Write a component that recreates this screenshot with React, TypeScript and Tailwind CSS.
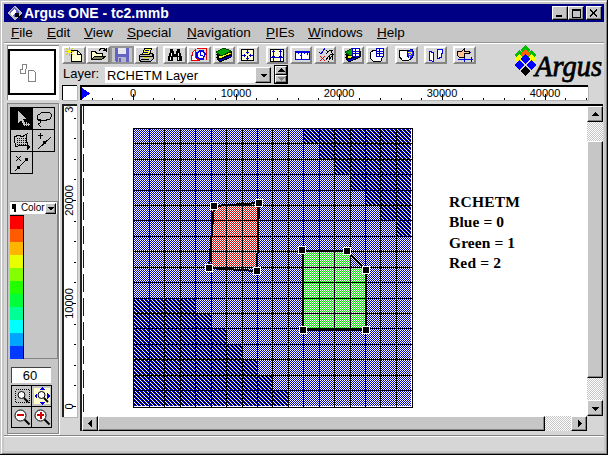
import React from "react";

const X = [133, 149, 164, 180, 195, 211, 226, 242, 257, 272, 288, 303, 319, 334, 350, 365, 380, 396, 412];
const Y = [128, 143, 159, 174, 190, 205, 220, 236, 251, 267, 282, 298, 313, 328, 344, 359, 375, 390, 407];
const SWATCHES = ["#ff0000", "#ff5a00", "#ffb500", "#e7ff00", "#84ff00", "#21ff00", "#00ff39", "#00ff94", "#00ffff", "#00a5ff", "#0039ff"];
const HANDLES = [[214, 206], [259, 203], [209, 268], [257, 271], [302, 250], [347, 251], [366, 270], [366, 330], [303, 330]];
const FONT = "'Liberation Sans', Arial, sans-serif";

function Icon({ w = 20, h = 16, children }: { w?: number; h?: number; children: React.ReactNode }) {
  return (
    <svg width={w} height={h} viewBox={`0 0 ${w} ${h}`} className="block shrink-0" shapeRendering="crispEdges" fill="none">
      {children}
    </svg>
  );
}

function ToolButton({ children, className = "", off = false }: { children: React.ReactNode; className?: string; off?: boolean }) {
  return (
    <div
      className={`flex h-[18px] shrink-0 items-center justify-center border-2 ${
        off ? "border-[#949494] bg-[#c6c6c6]" : "border-t-white border-l-white border-r-[#848484] border-b-[#848484] bg-[#d6d6d6]"
      } ${className}`}
    >
      {children}
    </div>
  );
}

function Stack() {
  return (
    <>
      <path d="M3 10l4 5 11-5v-2l-11 4z" fill="#0000c6" stroke="#000" />
      <path d="M3 7l4 5 11-5v-2l-11 4z" fill="#ffff00" stroke="#000" />
      <path d="M3 5l8-4 7 3-10 5z" fill="#00a500" stroke="#004200" />
    </>
  );
}

function Sheet() {
  return (
    <>
      <rect x="10" y="1" width="7" height="8" fill="#fff" stroke="#0000c6" transform="translate(.5 .5)" />
      <path d="M10 4.500h8M10 6.500h8M13.500 1v9" stroke="#0000c6" />
    </>
  );
}

function Toolbar() {
  return (
    <div className="flex h-[18px]">
      <ToolButton className="w-6">
        <Icon>
          <path d="M7.500 3.500h6l4 4v7h-10z" fill="#ffffce" stroke="#000" />
          <path d="M13.500 3.500v4h4" stroke="#000" />
          <path d="M5.500 0v9M1 4.500h9M2 1l7 7M9 1l-7 7" stroke="#d6c600" />
          <rect x="4" y="3" width="3" height="3" fill="#ffff00" />
        </Icon>
      </ToolButton>
      <ToolButton className="w-6">
        <Icon>
          <path d="M3.500 12.500v-8h4l1 2h6v3" fill="#ffffce" stroke="#000" />
          <path d="M3.500 12.500l3-3h11l-4 3z" fill="#84845a" stroke="#000" />
          <path d="M11 3.500l2-2h3l2 2v-3M15 3.500h3" stroke="#000" />
        </Icon>
      </ToolButton>
      <ToolButton className="w-6" off>
        <Icon>
          <path d="M3 1h14v14H4l-1-1z" fill="#6363c6" />
          <rect x="6" y="1" width="8" height="6" fill="#e7e7ef" />
          <rect x="6" y="10" width="8" height="5" fill="#b5b5c6" />
          <rect x="7" y="11" width="2" height="4" fill="#6363c6" />
        </Icon>
      </ToolButton>
      <ToolButton className="mr-[5px] w-6">
        <Icon>
          <path d="M3.500 8.500l3-2h10l1 2v3l-3 3h-10l-1-2z" fill="#bdbdbd" stroke="#000" />
          <path d="M6.500 7.500l2-6h7l-2 6z" fill="#ffff42" stroke="#000" />
          <path d="M9 3.500h4M8 5.500h4" stroke="#000084" />
          <path d="M3 9.500h12M5 12.500h8M15.500 10l2-2" stroke="#000" />
          <rect x="7" y="10" width="6" height="1" fill="#e7d600" />
        </Icon>
      </ToolButton>
      <ToolButton className="w-6">
        <Icon>
          <path d="M5 2h3v2h1v3h2V4h1V2h3v3l2 5v4h-5v-4h-4v4H3v-4l2-5z" fill="#000" />
          <path d="M6 6v3M5 10v3M13 6v3M13 10v3" stroke="#fff" />
        </Icon>
      </ToolButton>
      <ToolButton className="mr-0.5 w-6">
        <Icon>
          <path d="M2 12l2-7 2-2v7l4 3H2z" fill="#fff" stroke="#e70000" />
          <path d="M8 1.500h9.500v11" stroke="#e70000" />
          <path d="M8 10V6l3-2h3l2 3-2 5h-3z" fill="#fff" stroke="#0000e7" strokeWidth="1.500" />
          <path d="M11 5v3h3" stroke="#0000e7" />
        </Icon>
      </ToolButton>
      <ToolButton className="mr-0.5 w-[22px]"><Icon w={18}><g transform="translate(-2)"><Stack /></g></Icon></ToolButton>
      <ToolButton className="mr-[7px] w-[22px]">
        <Icon w={18}>
          <rect x="2.500" y="2.500" width="12" height="11" fill="#ffffce" stroke="#000" />
          <path d="M8.500 3v4M8.500 9v4M3 8h4M10 8h4" stroke="#0000c6" />
          <path d="M7 5h3M7 11h3M5.500 6.500v3M11.500 6.500v3" stroke="#0000c6" />
        </Icon>
      </ToolButton>
      <ToolButton className="mr-0.5 w-[22px]">
        <Icon w={18}>
          <rect x="2.500" y="2.500" width="13" height="12" fill="#ffffce" stroke="#000" />
          <path d="M5.500 2v12M12.500 2v12M2 10.500h14" stroke="#0000c6" />
          <path d="M4 4.500h3M4 9h3M11 4.500h3M11 9h3" stroke="#0000c6" />
        </Icon>
      </ToolButton>
      <ToolButton className="mr-0.5 w-[22px]">
        <Icon w={18}>
          <path d="M3.500 12.500v-8h14v8M3.500 5h13M6.500 5v2M9.500 5v3M12.500 5v2M15.500 5v3M3 12.500h14" fill="#fff" stroke="#0000e7" />
          <path d="M8 8.500h1.500v3" stroke="#0000e7" />
        </Icon>
      </ToolButton>
      <ToolButton className="mr-1.5 w-[22px]">
        <Icon w={18}>
          <path d="M3 5l2 2 4-6" stroke="#0000e7" />
          <path d="M4 9l5 5M9 9l-5 5" stroke="#e70000" strokeWidth="1.300" />
          <path d="M10 3l2 2 2-2M12 5l-2 2M14 3h3l-2 2 2 2h-3M10 13l3-4v4l3-4v4" stroke="#000" />
        </Icon>
      </ToolButton>
      <ToolButton className="mr-0.5 w-[22px]"><Icon w={18}><g transform="translate(-2)"><Stack /><Sheet /></g></Icon></ToolButton>
      <ToolButton className="mr-[7px] w-[22px]">
        <Icon w={18}>
          <path d="M2 6l4-3h5l4 5-2 6H5l-2-2z" fill="#fff" stroke="#000" />
          <g transform="translate(-2)"><Sheet /></g>
        </Icon>
      </ToolButton>
      <ToolButton className="mr-1.5 w-[23px]">
        <Icon w={19}>
          <path d="M2 3h8l5 2v6l-3 2H5l-3-4z" fill="#fff" stroke="#000" />
          <path d="M10 5l5-3 2 5-3 5-4-3z" fill="#3939ff" stroke="#0000a5" />
          <path d="M11 5h3v2l-2 1M12 9v2" stroke="#ffff00" />
        </Icon>
      </ToolButton>
      <ToolButton className="mr-1.5 w-[23px]">
        <Icon w={19}>
          <path d="M3.500 4.500l4 1v9l-4-1zM11.500 2.500l5 0-1 8-4 1z" fill="#fff" stroke="#0000e7" />
        </Icon>
      </ToolButton>
      <ToolButton className="w-[23px]">
        <Icon w={19}>
          <path d="M9.500 1v14M3 12.500h15M16 10v5" stroke="#0000e7" />
          <path d="M2 4h5l2-2v2h5v2H9v4H4L2 8z" fill="#ffc694" stroke="#000" />
          <path d="M15 5h1" stroke="#0000e7" />
        </Icon>
      </ToolButton>
    </div>
  );
}

function Logo() {
  const gems: [number, number, string][] = [
    [11, 6, "#00bd00"], [5, 11, "#00bd00"], [17, 11, "#00bd00"],
    [11, 10, "#ff6300"], [5, 15, "#ffff00"], [17, 15, "#ffff00"],
    [11, 15, "#0000ff"], [5, 21, "#0000ff"], [17, 21, "#0000ff"], [11, 27, "#000"],
  ];
  return (
    <svg width="90" height="41" className="block shrink-0" fill="none">
      {gems.map(([x, y, c], i) => (
        <path key={i} d={`M${x} ${y - 5}l5 5-5 5-5-5z`} fill={c} shapeRendering="crispEdges" />
      ))}
      <text x="21" y="31.500" textLength="67" lengthAdjust="spacingAndGlyphs" fontFamily="'Liberation Serif', serif" fontStyle="italic" fontSize="29" fill="#000" stroke="#000" strokeWidth="0.8">Argus</text>
    </svg>
  );
}

function Menu() {
  const items: [string, string][] = [
    ["File", "w-9"], ["Edit", "w-[37px]"], ["View", "w-[43px]"], ["Special", "w-[60px]"],
    ["Navigation", "w-[79px]"], ["PIEs", "w-[42px]"], ["Windows", "w-[69px]"], ["Help", "w-10"],
  ];
  return (
    <div className="flex h-5 shrink-0 items-center bg-[#c6c6c6] pt-0.5 pl-[7px] text-[13.500px] leading-[18px]">
      {items.map(([t, w]) => (
        <span key={t} className={`${w} shrink-0`}>
          <span className="underline decoration-1 underline-offset-1">{t[0]}</span>{t.slice(1)}
        </span>
      ))}
    </div>
  );
}

function HRuler() {
  return (
    <svg width="506" height="13" className="block" shapeRendering="crispEdges">
      <path d="M0 1l8 5.500-8 5.500z" fill="#0000ff" />
      {Array.from({ length: 25 }, (_, i) => {
        const x = Math.round(9.5 + i * 20.6);
        return <rect key={i} x={x} y={i % 5 === 2 ? 7 : 11} width="1" height={i % 5 === 2 ? 6 : 2} fill="#000" />;
      })}
      {["0", "10000", "20000", "30000", "40000"].map((t, i) => (
        <text key={t} x={51 + i * 103} y="9.500" textAnchor="middle" fontSize="11" fontFamily={FONT}>{t}</text>
      ))}
    </svg>
  );
}

function VRuler() {
  return (
    <svg width="13" height="311" viewBox="64 106 13 311" className="block" shapeRendering="crispEdges">
      {Array.from({ length: 15 }, (_, i) => (
        <rect key={i} x={i % 5 === 0 ? 72 : 74} y={Math.round(406 - i * 20.6)} width={i % 5 === 0 ? 4 : 2} height="1" fill="#000" />
      ))}
      {["0", "10000", "20000", "30000"].map((t, i) => (
        <text key={t} transform={`translate(73 ${406.5 - i * 103}) rotate(-90)`} textAnchor="middle" fontSize="11" fontFamily={FONT}>{t}</text>
      ))}
    </svg>
  );
}

function Canvas() {
  const legend: [string, number, number][] = [["RCHETM", 207, 71], ["Blue = 0", 227, 55], ["Green = 1", 248, 66], ["Red = 2", 268, 52]];
  return (
    <svg width="505" height="310" viewBox="82 106 505 310" className="block" shapeRendering="crispEdges">
      <defs>
        {[["blue", "#0000c6"], ["red", "#e70000"], ["green", "#00e700"]].map(([id, c]) => (
          <pattern key={id} id={id} width="2" height="2" patternUnits="userSpaceOnUse">
            <rect width="2" height="2" fill="#fff" />
            <rect x="1" width="1" height="1" fill={c} />
            <rect y="1" width="1" height="1" fill={c} />
          </pattern>
        ))}
        {/* Diagonals repeat as white, blue, black, blue */}
        <pattern id="deep" width="4" height="4" patternUnits="userSpaceOnUse">
          <rect width="4" height="4" fill="#0000c6" />
          {[0, 1, 2, 3].map((i) => (
            <React.Fragment key={i}>
              <rect x={i} y={i} width="1" height="1" fill="#fff" />
              <rect x={(i + 2) % 4} y={i} width="1" height="1" fill="#000" />
            </React.Fragment>
          ))}
        </pattern>
      </defs>
      <path d="M83.500 106V412" stroke="#0000c6" strokeDasharray="18 6" />
      <rect x="133" y="128" width="278" height="278" fill="url(#blue)" />
      {Array.from({ length: 7 }, (_, i) => (
        <React.Fragment key={i}>
          <rect x={X[11 + i]} y={Y[i]} width={411 - X[11 + i]} height={Y[i + 1] - Y[i]} fill="url(#deep)" />
          <rect x="133" y={Y[11 + i]} width={X[4 + i] - 133} height={(i === 6 ? 406 : Y[12 + i]) - Y[11 + i]} fill="url(#deep)" />
        </React.Fragment>
      ))}
      <rect x="211" y="205" width="46" height="62" fill="url(#red)" />
      <path d="M303 251h47v16h15v61h-62z" fill="url(#green)" />
      {X.map((x) => <rect key={x} x={x} y="128" width="1" height="279" fill="#000" />)}
      {Y.map((y) => <rect key={y} x="133" y={y} width="280" height="1" fill="#000" />)}
      <g fill="none" stroke="#000" strokeWidth="2">
        <path d="M214 206L259 203L257 271L209 268Z" />
        <path d="M302.500 250.500L347 251L366 270V330H303Z" />
      </g>
      {HANDLES.map(([x, y], i) => <rect key={i} x={x - 3.5} y={y - 3.5} width="7" height="7" fill="#000" stroke="#fff" />)}
      {legend.map(([t, y, w]) => (
        <text key={t} x="449" y={y} textLength={w} fontFamily="'Liberation Serif', serif" fontWeight="bold" fontSize="15.500">{t}</text>
      ))}
    </svg>
  );
}

function Tool({ children, className = "" }: { children: React.ReactNode; className?: string }) {
  return <div className={`flex items-center justify-center bg-[#c6c6c6] outline outline-black ${className}`}>{children}</div>;
}

function Lens({ sign, fit = false }: { sign?: string; fit?: boolean }) {
  return (
    <Icon w={18} h={18}>
      {fit && <><rect x="1" y="1" width="16" height="16" fill="#ffffce" /><path d="M9 0l3 3H6zM9 18l3-3H6zM1 9l3-3v6zM17 9l-3-3v6z" fill="#0000e7" /></>}
      {!sign && !fit && <rect x="2.500" y="2.500" width="14" height="13" stroke="#000" strokeDasharray="1 1" />}
      <g shapeRendering="auto">
        <circle cx={sign ? 7.5 : 8.5} cy={sign ? 7.5 : 8} r={sign ? 5.5 : 3.5} fill="#fff" stroke="#000" />
        <path d={sign ? "M11.500 11.500l5 5" : "M11 11l4 4"} stroke="#000" strokeWidth="2" />
      </g>
      {sign && <path d={sign === "+" ? "M4 7h7M7.500 4v7" : "M4 7h7"} stroke="#d60000" strokeWidth="2" />}
    </Icon>
  );
}

function Arrow({ d }: { d: string }) {
  return <Icon w={9} h={9}><path d={d} fill="#000" /></Icon>;
}

const BEVEL = "flex shrink-0 items-center justify-center border border-t-white border-l-white border-r-black border-b-black bg-[#c6c6c6] shadow-[inset_-1px_-1px_0_#848484]";
const TRACK = "bg-[repeating-conic-gradient(#fff_0_25%,#c6c6c6_0_50%)] bg-[length:2px_2px]";

function SidePanel() {
  return (
    <div className="ml-[3px] flex w-[52px] shrink-0 flex-col">
      <div className="mt-px h-[55px] border-t border-l border-[#848484] bg-white pt-[3px]">
        <div className="flex h-[46px] w-[48px] border-2 border-black bg-white">
          <Icon w={44} h={42}>
            <path d="M12.500 13.500h4l-1 9h-5v-4h2zM18.500 19.500h5l2 2v9h-7z" stroke="#848484" />
          </Icon>
        </div>
      </div>
      <div className="mt-[3px] flex h-[331px] flex-col border border-[#848484] bg-[#c6c6c6] pl-[2px] shadow-[1px_1px_0_#fff]">
        <div className="mt-[4px] ml-px grid w-[43px] grid-cols-[21px_21px] grid-rows-[21px_21px_21px] gap-px">
          <Tool className="bg-black!">
            <Icon w={20} h={20}><path d="M6 2v12l3-3 3 6 2-1-3-6h4z" fill="#c6c6c6" /><path d="M14 13v4M16 14v3M13 15h5" stroke="#c6c6c6" /></Icon>
          </Tool>
          <Tool>
            <Icon w={20} h={20}><path d="M6 12l-3-2 1-4 5-3h6l3 3-2 4-7 2-3-1M4 10l3 1-1 3-2 1 3 3" stroke="#000" /></Icon>
          </Tool>
          <Tool>
            <Icon w={20} h={20}>
              <path d="M2 6l5-2 3 2 5-3-1 5 2 7-8-1-4 2-1-4z" stroke="#000" />
              <path d="M5 7h9M5 9h9M5 11h10M5 13h9" stroke="#000" strokeDasharray="1 1" />
              <path d="M15 13l4 3-4 3z" fill="#000" />
            </Icon>
          </Tool>
          <Tool>
            <Icon w={20} h={20}><path d="M6.500 2v6M4 4.500h5M4 18L17 6" stroke="#000" /><rect x="9" y="10" width="3" height="3" fill="#000" /></Icon>
          </Tool>
          <Tool>
            <Icon w={20} h={20}><path d="M4 3l5 5M9 3l-5 5M3 18L16 5" stroke="#000" /><rect x="5" y="13" width="3" height="3" fill="#000" /><rect x="13" y="5" width="3" height="3" fill="#000" /></Icon>
          </Tool>
        </div>
        <div className="mt-[28px] flex h-[158px] w-[48px] flex-col border-t border-r border-b border-[#848484]">
          <div className="flex h-[12px] shrink-0 items-center bg-white">
            <Icon w={11} h={12}><path d="M2 2h4v8H4V7H2z" fill="#000" /></Icon>
            <span className="w-[24px] text-[10px] leading-3 tracking-[-0.100px]">Color</span>
            <div className={`${BEVEL} h-[11px] w-[11px]`}><Arrow d="M1 3h7L4.500 6.500z" /></div>
          </div>
          <div className="mt-px w-[14px] border-t border-r border-black">
            {SWATCHES.map((c) => <div key={c} className="h-[13px]" style={{ backgroundColor: c }} />)}
          </div>
        </div>
        <div className="mt-[8px] ml-px h-[16px] w-[40px] border-t border-l border-[#424242] bg-white pr-[3px] text-center text-[13px] leading-[15px]">60</div>
        <div className="mt-[3px] ml-[2px] grid grid-cols-[19px_19px] grid-rows-[20px_20px] gap-px">
          <Tool><Lens /></Tool>
          <Tool><Lens fit /></Tool>
          <Tool><Lens sign="-" /></Tool>
          <Tool><Lens sign="+" /></Tool>
        </div>
      </div>
    </div>
  );
}

export default function App() {
  return (
    <div className="flex h-[455px] w-[608px] flex-col overflow-hidden border-r border-b border-black bg-[#c6c6c6] font-['Liberation_Sans',Arial,sans-serif] text-black">
      <div className="mt-px ml-px flex h-[453px] w-[606px] flex-col border border-t-white border-l-white border-r-[#848484] border-b-[#848484] p-0.5">
        <header className="flex h-[18px] shrink-0 items-center bg-[#000084] pr-[2px] pl-[2px] text-white">
          <Icon w={18} h={16}>
            <path d="M9 1l8 7-8 7-8-7z" fill="#bdbdbd" />
            <path d="M8 2l5 5-5 5-5-5z" fill="#6363c6" />
            <path d="M5 8l4-5 1 4-4 4z" fill="#fff" />
            <path d="M9 8h4v4H9zM14 10h2v5h-2z" fill="#000" />
          </Icon>
          <span className="flex-1 text-[14px] leading-[18px] font-bold">Argus ONE - tc2.mmb</span>
          <div className="flex text-black">
            <div className={`${BEVEL} h-[14px] w-[16px]`}><Icon w={12} h={10}><path d="M2 7h6v2H2z" fill="#000" /></Icon></div>
            <div className={`${BEVEL} h-[14px] w-[16px]`}><Icon w={12} h={10}><path d="M2 1h9v9H2zM3 3v6h7V3z" fill="#000" fillRule="evenodd" /></Icon></div>
            <div className={`${BEVEL} ml-0.5 h-[14px] w-[16px]`}><Icon w={12} h={10}><path d="M2 1.500l7 7M9 1.500l-7 7" stroke="#000" strokeWidth="1.500" /></Icon></div>
          </div>
        </header>
        <Menu />
        <div className="h-0.5 shrink-0 border-t border-[#949494] bg-white" />
        <main className="flex h-[391px] shrink-0 bg-[#d6d6d6]">
          <SidePanel />
          <div className="ml-[3px] flex flex-1 flex-col">
            <div className="flex h-[41px] shrink-0 justify-between">
              <div className="pt-0.5">
                <Toolbar />
                <div className="flex h-[20px] items-start pt-px">
                  <span className="w-[43px] pl-px text-[13px] leading-[17px]">Layer:</span>
                  <div className="mt-[2px] flex h-[16px] w-[166px] bg-white">
                    <span className="flex-1 pl-[2px] text-[12.900px] leading-[17px] whitespace-nowrap">RCHETM Layer</span>
                    <div className={`${BEVEL} h-[16px] w-[16px]`}><Arrow d="M1 3h7L4.500 6.500z" /></div>
                  </div>
                  <div className="ml-[3px] flex h-[19px] w-[14px] flex-col border border-black">
                    <div className={`${BEVEL} h-[9px] w-full`}><Arrow d="M1 6h7L4.500 2z" /></div>
                    <div className={`${BEVEL} h-[8px] w-full`}><Icon w={9} h={8}><path d="M1 2h7L4.500 6z" fill="#848484" /></Icon></div>
                  </div>
                </div>
              </div>
              <Logo />
            </div>
            <div className="flex h-[15px] shrink-0 gap-[3px]">
              <div className="w-[15px] border-t border-l border-black bg-white shadow-[1px_1px_0_#b5b5b5]" />
              <div className="w-[508px] border-t-2 border-l-2 border-t-black border-l-black bg-white shadow-[1px_1px_0_#b5b5b5]"><HRuler /></div>
            </div>
            <div className="mt-[4px] flex h-[327px] shrink-0 gap-[3px]">
              <div className="h-[313px] w-[15px] border-t-2 border-l-2 border-[#212121] bg-white shadow-[1px_1px_0_#b5b5b5]"><VRuler /></div>
              <div className="flex flex-1 flex-col border-l-2 border-[#212121]">
                <div className="flex h-[312px]">
                  <div className="w-[505px] border-t-2 border-black bg-white"><Canvas /></div>
                  <div className="flex w-[16px] flex-col border-t-2 border-black">
                    <div className={`flex flex-1 flex-col ${TRACK}`}>
                      <div className={`${BEVEL} h-[16px]`}><Arrow d="M1 6h7L4.500 2z" /></div>
                      <div className="h-[19px]" />
                      <div className={`${BEVEL} h-[237px]`} />
                      <div className="flex-1" />
                      <div className={`${BEVEL} h-[16px]`}><Arrow d="M1 3h7L4.500 7z" /></div>
                    </div>
                  </div>
                </div>
                <div className={`flex h-[15px] w-[505px] ${TRACK}`}>
                  <div className={`${BEVEL} w-[16px]`}><Arrow d="M6 1v7L2 4.500z" /></div>
                  <div className={`${BEVEL} w-[447px]`} />
                  <div className="flex-1" />
                  <div className={`${BEVEL} w-[16px]`}><Arrow d="M3 1v7L7 4.500z" /></div>
                </div>
              </div>
            </div>
          </div>
        </main>
        <footer className="flex-1 border-t border-[#848484] bg-[#d6d6d6] shadow-[inset_0_1px_0_#fff]" />
      </div>
    </div>
  );
}
